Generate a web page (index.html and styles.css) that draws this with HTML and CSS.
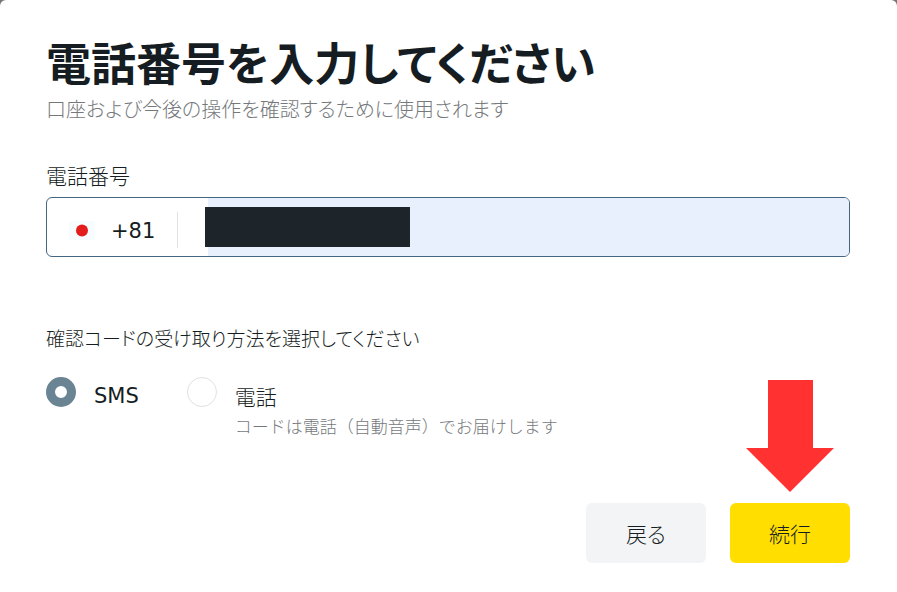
FILE: index.html
```
<!DOCTYPE html>
<html lang="ja">
<head>
  <meta charset="UTF-8">
  <meta name="viewport" content="width=device-width, initial-scale=1.0">
  <title>電話番号の入力</title>
  <link rel="stylesheet" href="styles.css">
</head>
<body>
<main class="dialog">
  <h1>電話番号を入力してください</h1>
  <p class="subtitle">口座および今後の操作を確認するために使用されます</p>

  <form id="phoneForm">
    <label class="field-label" for="phone">電話番号</label>
    <div class="phone-field">
      <div class="prefix">
        <svg class="flag" width="26" height="19" viewBox="0 0 26 19" aria-hidden="true">
          <rect width="26" height="19" fill="#f7fcff"/>
          <circle cx="13" cy="9.5" r="6" fill="#e31d1c"/>
        </svg>
        <span class="code">+81</span>
      </div>
      <input type="tel" id="phone" name="phone">
      <div class="mask"></div>
    </div>

    <fieldset class="methods">
      <legend>確認コードの受け取り方法を選択してください</legend>
      <div class="options">
        <div class="option">
          <input type="radio" id="sms" name="method" value="sms" checked>
          <label for="sms" class="latin">SMS</label>
        </div>
        <div class="option">
          <input type="radio" id="call" name="method" value="call">
          <label for="call">電話<small>コードは電話（自動音声）でお届けします</small></label>
        </div>
      </div>
    </fieldset>

    <div class="actions">
      <button type="button" class="back">戻る</button>
      <div class="next-wrap">
        <svg class="arrow" width="88" height="112" viewBox="0 0 88 112" aria-hidden="true">
          <path d="M22 0h45v68h21L44 112 0 68h22z" fill="#ff3131"/>
        </svg>
        <button type="submit" class="next">続行</button>
      </div>
    </div>
  </form>
</main>
</body>
</html>
```
FILE: styles.css
```
* { box-sizing: border-box; }
body {
  margin: 0;
  background: #777;
  color: #151d22;
  font-family: "Noto Sans CJK JP", sans-serif;
  font-size: 21px;
  font-weight: 300;
  line-height: 30px;
  font-feature-settings: "palt";
}
.dialog {
  min-height: 100vh;
  padding: 30px 47px 28px 46px;
  background: #fff;
  border-radius: 6px 6px 0 0;
}
h1 {
  margin: 0;
  font-size: 45px;
  font-weight: 700;
  line-height: 64px;
}
.subtitle {
  margin: 0 0 36px;
  color: #75797c;
  font-size: 20px;
}
.field-label {
  display: block;
  margin-bottom: 7px;
}
.phone-field {
  position: relative;
  display: flex;
  height: 60px;
  border: 1px solid #446580;
  border-radius: 6px;
  overflow: hidden;
}
.prefix {
  display: flex;
  align-items: center;
  width: 131px;
  height: 36px;
  margin: 14px 30px 0 0;
  padding-left: 22px;
  gap: 16px;
  border-right: 1px solid #dfe1e3;
}
.code,
.latin {
  font-family: "DejaVu Sans", sans-serif;
  font-weight: 400;
}
.code { padding-top: 2px; }
#phone {
  flex: 1;
  min-width: 0;
  border: none;
  outline: none;
  background: #e8effd;
  font: inherit;
}
/* hides the number */
.mask {
  position: absolute;
  top: 9px;
  left: 158px;
  width: 205px;
  height: 40px;
  background: #1d242a;
}
.methods {
  margin: 66px 0 0;
  padding: 0;
  border: none;
}
legend {
  padding: 0;
  font-size: 19px;
}
.options {
  display: flex;
  gap: 48px;
  margin-top: 24px;
}
.option {
  display: flex;
  align-items: flex-start;
  gap: 18px;
}
.option input {
  appearance: none;
  width: 30px;
  height: 30px;
  margin: 0;
  border: 1px solid #dfe1e3;
  border-radius: 50%;
}
.option input:checked { border: 9px solid #6b8494; }
.option label { padding-top: 4px; }
.option small {
  display: block;
  color: #75797c;
  font-size: 17px;
  font-feature-settings: normal;
}
.actions {
  display: flex;
  justify-content: flex-end;
  gap: 24px;
  margin-top: 62px;
}
.next-wrap { position: relative; }
.arrow {
  position: absolute;
  left: 16px;
  bottom: 71px;
}
button {
  display: block;
  width: 120px;
  height: 60px;
  border: none;
  border-radius: 6px;
  color: inherit;
  font: inherit;
  font-feature-settings: "palt";
  cursor: pointer;
}
.back { background: #f3f4f6; }
.next { background: #ffde00; }
```
